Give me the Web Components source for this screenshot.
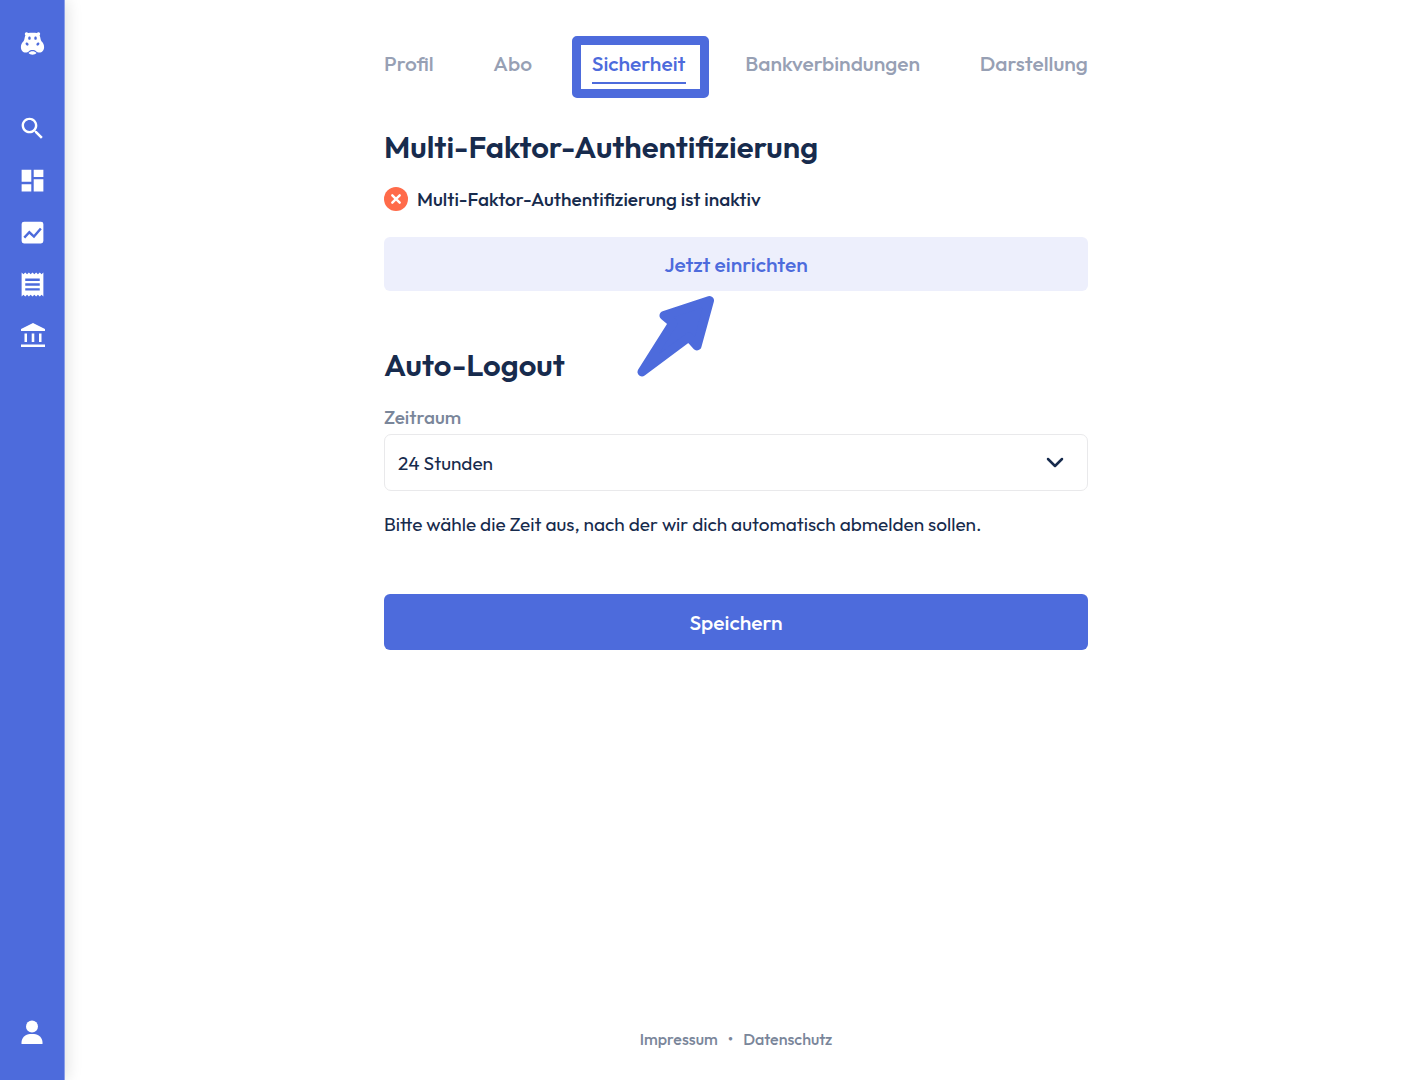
<!DOCTYPE html>
<html lang="de">
<head>
<meta charset="utf-8">
<meta name="viewport" content="width=device-width, initial-scale=1">
<title>Sicherheit</title>
<style>
  :root {
    --primary: #4d6bdc;
    --primary-light: #edeffc;
    --text: #172b4d;
    --muted: #7a869a;
    --tab: #97a0b4;
    --line: #e9e9eb;
    --danger: #ff6b4a;
  }

  body {
    margin: 0;
    font-family: Outfit, Lato, sans-serif;
    font-size: 19px;
    font-weight: 400;
    color: var(--text);
    background: #ffffff;
  }
</style>
</head>
<body>
<app-shell>
  <side-bar slot="nav"></side-bar>
  <tab-bar>
    <tab-link href="#profil">Profil</tab-link>
    <tab-link href="#abo">Abo</tab-link>
    <tab-link href="#sicherheit" active>Sicherheit</tab-link>
    <tab-link href="#bank">Bankverbindungen</tab-link>
    <tab-link href="#darstellung">Darstellung</tab-link>
  </tab-bar>
  <settings-section heading="Multi-Faktor-Authentifizierung">
    <status-line>Multi-Faktor-Authentifizierung ist inaktiv</status-line>
    <action-button variant="light" pointer>Jetzt einrichten</action-button>
  </settings-section>
  <settings-section heading="Auto-Logout">
    <select-field></select-field>
    <action-button>Speichern</action-button>
  </settings-section>
  <page-footer slot="footer"></page-footer>
</app-shell>

<script>
function attach(element, html) {
  const template = document.createElement("template");
  template.innerHTML = html;
  const root = element.attachShadow({ mode: "open" });
  root.appendChild(template.content.cloneNode(true));
  return root;
}

customElements.define("app-shell", class extends HTMLElement {
  constructor() {
    super();
    attach(this, `
<style>
  :host {
    display: flex;
    min-height: 100vh;
  }

  .page {
    flex: 1;
    display: flex;
    flex-direction: column;
    align-items: center;
    box-sizing: border-box;
    padding: 48px 24px 29px;
  }

  main {
    width: 100%;
    max-width: 704px;
    flex: 1;
  }
</style>
<slot name="nav"></slot>
<div class="page">
  <main><slot></slot></main>
  <slot name="footer"></slot>
</div>`);
  }
});

customElements.define("side-bar", class extends HTMLElement {
  constructor() {
    super();
    attach(this, `
<style>
  :host {
    display: block;
    width: 64px;
    background: var(--primary);
    box-shadow: 1px 0 0 #8a9ee8, 2px 0 16px rgba(0, 0, 0, 0.14);
    flex: none;
  }

  nav {
    display: flex;
    flex-direction: column;
    align-items: center;
    height: 100%;
    box-sizing: border-box;
    padding: 30px 0 33px;
    gap: 23px;
  }

  a {
    display: block;
    width: 29px;
    height: 29px;
    color: #ffffff;
  }

  .logo {
    margin-bottom: 32px;
  }

  .account {
    margin-top: auto;
  }

  svg {
    display: block;
    width: 29px;
    height: 29px;
    fill: currentColor;
  }
</style>
<nav>
  <a class="logo" href="#start" aria-label="Start">
    <svg viewBox="0 0 29 29">
      <path fill-rule="evenodd" d="M7.400 2.700c.8-.8 2.100-.6 2.700.4 2.900-.6 5.900-.6 8.800 0 .6-1 1.900-1.200 2.700-.4.8.7.7 1.800 0 2.500.5 1.200.7 2.400 1 3.700.3 1.400.8 2.200 1.600 3.200 1.100 1.300 1.900 2.900 1.900 4.800 0 3.400-2 5.600-4.800 5.600-1.300 0-2.200-.4-3-1.100-1-.9-2.300-1.400-3.800-1.400s-2.800.5-3.800 1.400c-.8.7-1.700 1.100-3 1.100-2.800 0-4.800-2.200-4.800-5.600 0-1.900.8-3.500 1.900-4.800.8-1 1.300-1.800 1.600-3.200.3-1.300.5-2.500 1-3.700-.7-.7-.8-1.800 0-2.500z
        M11.500 6.600c-.8 0-1.300.7-1.300 1.600s.5 1.600 1.300 1.600 1.200-.7 1.200-1.600-.4-1.600-1.200-1.600z
        M17.500 6.600c-.8 0-1.200.7-1.200 1.600s.4 1.600 1.200 1.600 1.300-.7 1.300-1.600-.5-1.600-1.300-1.600z
        M8.400 12.500c-.8.300-1 1.100-.6 2 .5.900 1.400 1.400 2.100 1s.9-1.200.4-2c-.4-.8-1.200-1.300-1.900-1z
        M20.600 12.500c.8.300 1 1.100.6 2-.5.900-1.400 1.400-2.100 1s-.9-1.200-.4-2c.4-.8 1.200-1.300 1.900-1z"/>
      <path d="M10.500 23c1-1.200 2.400-1.700 4-1.700s3 .5 4 1.700c-1 1.200-2.400 1.700-4 1.700s-3-.5-4-1.700z"/>
    </svg>
  </a>
  <a href="#suche" aria-label="Suche">
    <svg viewBox="0 0 24 24"><path d="M15.500 14h-.79l-.28-.27C15.410 12.590 16 11.110 16 9.500 16 5.910 13.090 3 9.500 3S3 5.910 3 9.500 5.910 16 9.500 16c1.610 0 3.090-.59 4.230-1.570l.27.28v.79l5 4.990L20.490 19l-4.990-5zm-6 0C7.010 14 5 11.990 5 9.500S7.010 5 9.500 5 14 7.010 14 9.500 11.990 14 9.500 14z"/></svg>
  </a>
  <a href="#uebersicht" aria-label="Übersicht">
    <svg viewBox="0 0 24 24"><path d="M3 13h8V3H3v10zm0 8h8v-6H3v6zm10 0h8V11h-8v10zm0-18v6h8V3h-8z"/></svg>
  </a>
  <a href="#analyse" aria-label="Analyse">
    <svg viewBox="0 0 24 24">
      <rect x="3" y="3" width="18" height="18" rx="2"/>
      <path d="M5.200 16.200l4.200-4.400 3.800 3.600 5.700-6.700" fill="none" stroke="var(--primary)" stroke-width="2"/>
    </svg>
  </a>
  <a href="#buchungen" aria-label="Buchungen">
    <svg viewBox="0 0 24 24"><path d="M18 17H6v-2h12v2zm0-4H6v-2h12v2zm0-4H6V7h12v2zM3 22l1.500-1.500L6 22l1.500-1.500L9 22l1.500-1.500L12 22l1.500-1.500L15 22l1.500-1.500L18 22l1.500-1.500L21 22V2l-1.500 1.500L18 2l-1.500 1.500L15 2l-1.500 1.500L12 2l-1.500 1.500L9 2 7.500 3.500 6 2 4.500 3.500 3 2v20z"/></svg>
  </a>
  <a href="#konten" aria-label="Konten">
    <svg viewBox="0 0 29 29"><path d="M15 1 3 7v2h24V7zM6.500 11.500H9V20H6.500zM13.700 11.500h2.600V20h-2.600zM21 11.500h2.500V20H21zM3 22.500h24V25H3z"/></svg>
  </a>
  <a class="account" href="#konto" aria-label="Konto">
    <svg viewBox="0 0 29 29"><circle cx="14" cy="8.500" r="6"/><path d="M3.500 26v-1.500C3.500 20 7.500 16 12 16h4c4.500 0 8.500 4 8.500 8.500V26z"/></svg>
  </a>
</nav>`);
  }
});

customElements.define("tab-bar", class extends HTMLElement {
  constructor() {
    super();
    attach(this, `
<style>
  :host {
    display: block;
    margin-bottom: 43px;
  }

  nav {
    display: flex;
    justify-content: space-between;
  }
</style>
<nav><slot></slot></nav>`);
  }
});

customElements.define("tab-link", class extends HTMLElement {
  constructor() {
    super();
    const root = attach(this, `
<style>
  :host {
    display: block;
    position: relative;
    font-size: 21px;
    line-height: 30px;
    font-weight: 500;
  }

  a {
    display: block;
    color: var(--tab);
    text-decoration: none;
    border-bottom: 2px solid transparent;
    padding-bottom: 4px;
  }

  :host([active]) a {
    color: var(--primary);
    border-color: var(--primary);
  }

  /* thick frame around the active tab */
  :host([active])::after {
    content: "";
    position: absolute;
    inset: -12px -23px -14px -20px;
    border: 9px solid var(--primary);
    border-radius: 5px;
    pointer-events: none;
  }
</style>
<a><slot></slot></a>`);
    root.querySelector("a").href = this.getAttribute("href");
  }
});

customElements.define("settings-section", class extends HTMLElement {
  constructor() {
    super();
    const root = attach(this, `
<style>
  :host {
    display: block;
    margin-bottom: 54px;
  }

  h2 {
    margin: 0 0 20px;
    font-size: 31px;
    line-height: 40px;
    font-weight: 600;
  }
</style>
<section>
  <h2></h2>
  <slot></slot>
</section>`);
    root.querySelector("h2").textContent = this.getAttribute("heading");
  }
});

customElements.define("status-line", class extends HTMLElement {
  constructor() {
    super();
    attach(this, `
<style>
  :host {
    display: flex;
    align-items: center;
    gap: 9px;
    line-height: 24px;
    font-weight: 500;
    margin-bottom: 26px;
  }

  svg {
    width: 24px;
    height: 24px;
    flex: none;
  }
</style>
<svg viewBox="0 0 24 24" aria-hidden="true">
  <circle cx="12" cy="12" r="12" fill="var(--danger)"/>
  <path d="M8.300 8.300l7.400 7.400M15.700 8.300l-7.400 7.400" stroke="#fff" stroke-width="2.400" stroke-linecap="round"/>
</svg>
<span><slot></slot></span>`);
  }
});

customElements.define("action-button", class extends HTMLElement {
  constructor() {
    super();
    attach(this, `
<style>
  :host {
    display: block;
    position: relative;
  }

  button {
    display: block;
    width: 100%;
    margin: 0;
    padding: 12px 16px;
    border: 0;
    border-radius: 6px;
    font: inherit;
    font-size: 21px;
    line-height: 32px;
    font-weight: 500;
    color: #ffffff;
    background: var(--primary);
    cursor: pointer;
  }

  :host([variant="light"]) button {
    padding: 11px 16px;
    color: var(--primary);
    background: var(--primary-light);
  }

  svg {
    display: none;
    position: absolute;
    top: calc(100% + 3px);
    right: calc(50% + 20px);
    width: 80px;
    height: 84px;
    pointer-events: none;
  }

  :host([pointer]) svg {
    display: block;
  }
</style>
<button type="button"><slot></slot></button>
<svg viewBox="0 0 80 84" aria-hidden="true">
  <path d="M73.500 6.500 28 21.500l9 7.500L6 78l47-35 8 9z" fill="var(--primary)" stroke="var(--primary)" stroke-width="9" stroke-linejoin="round"/>
</svg>`);
  }
});

customElements.define("select-field", class extends HTMLElement {
  constructor() {
    super();
    attach(this, `
<style>
  :host {
    display: block;
    margin-bottom: 58px;
  }

  label {
    display: block;
    margin-bottom: 5px;
    line-height: 24px;
    font-weight: 500;
    color: var(--muted);
  }

  .box {
    position: relative;
  }

  select {
    display: block;
    width: 100%;
    height: 57px;
    box-sizing: border-box;
    padding: 0 56px 0 13px;
    border: 1px solid var(--line);
    border-radius: 7px;
    appearance: none;
    font: inherit;
    color: inherit;
    background: #ffffff;
  }

  svg {
    position: absolute;
    top: 50%;
    right: 24px;
    width: 18px;
    height: 12px;
    margin-top: -6px;
    pointer-events: none;
  }

  p {
    margin: 21px 0 0;
    line-height: 24px;
  }
</style>
<label for="period">Zeitraum</label>
<div class="box">
  <select id="period" aria-describedby="hint">
    <option>24 Stunden</option>
  </select>
  <svg viewBox="0 0 18 12" aria-hidden="true">
    <path d="M2 2l7 7 7-7" fill="none" stroke="var(--text)" stroke-width="2.500" stroke-linecap="round" stroke-linejoin="round"/>
  </svg>
</div>
<p id="hint">Bitte wähle die Zeit aus, nach der wir dich automatisch abmelden sollen.</p>`);
  }
});

customElements.define("page-footer", class extends HTMLElement {
  constructor() {
    super();
    attach(this, `
<style>
  :host {
    display: block;
    font-size: 16px;
    line-height: 24px;
    font-weight: 500;
    color: var(--muted);
  }

  footer {
    display: flex;
    gap: 10px;
  }

  a {
    color: inherit;
    text-decoration: none;
  }
</style>
<footer>
  <a href="#impressum">Impressum</a>
  <span>•</span>
  <a href="#datenschutz">Datenschutz</a>
</footer>`);
  }
});
</script>
</body>
</html>
